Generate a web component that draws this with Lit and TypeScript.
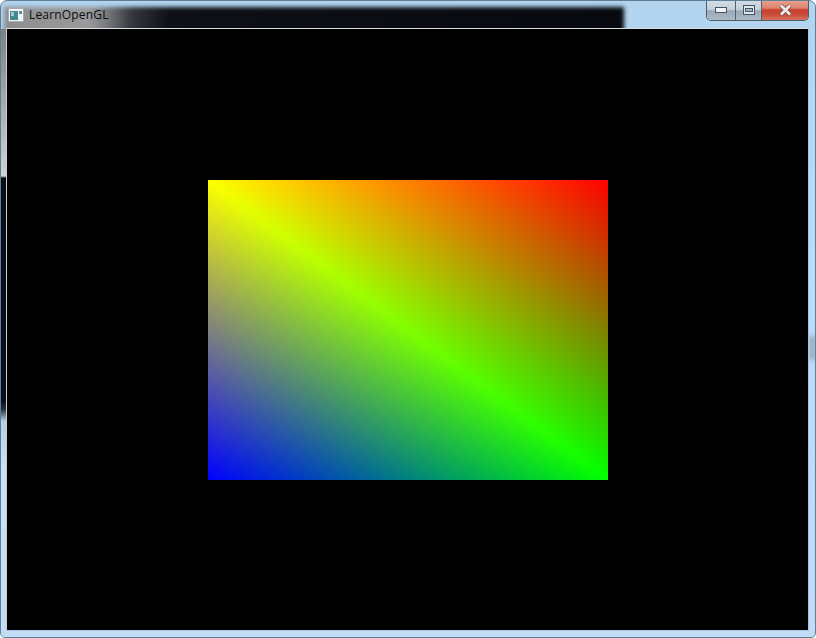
import { LitElement, html, css } from "lit";
import { customElement } from "lit/decorators.js";

@customElement("app-root")
export class AppRoot extends LitElement {
  static styles = css`
    :host { display: block; width: 816px; height: 638px; overflow: hidden; }
    .window {
      position: relative; box-sizing: border-box; width: 816px; height: 638px; overflow: hidden;
      display: flex; flex-direction: column; padding: 0 6px 6px 5px;
      border-radius: 7px 7px 5px 5px; border: 1px solid #5f7f96;
      background: linear-gradient(180deg, #b2d4ee 0%, #bcdcf6 40%, #c2dcf6 100%);
    }
    .leftglass {
      position: absolute; left: 0; top: 28px; width: 5px; height: 608px;
      background: linear-gradient(180deg, #7f8081 0px, #a0a1a2 60px, #d0d2d4 147px, #0a0c16 149px, #0b0c18 372px, #20303c 380px, #b0cfe8 392px, #cce2f5 440px, #c2dcf6 608px);
    }
    .rightmark {
      position: absolute; right: 0; top: 335px; width: 5px; height: 24px;
      background: #8fa5b8; filter: blur(2px);
    }
    .darkblur {
      position: absolute; left: 3px; top: 6px; width: 620px; height: 26px;
      background: linear-gradient(90deg, #8c8d8e 0, #9a9b9c 84px, #75777a 104px, #33363c 128px, #0e1017 165px, #07090f 100%);
      filter: blur(2px);
    }
    .titlebar {
      position: relative; height: 27px; flex: none; display: flex; align-items: center;
      padding-left: 2px; gap: 5px;
    }
    .appicon { position: relative; display: block; width: 16px; height: 16px; flex: none; }
    .title {
      position: relative; font: 12px "Open Sans", "Noto Sans", sans-serif; color: #0d0d0d;
      letter-spacing: 0.18px; white-space: nowrap;
    }
    .controls {
      position: absolute; right: 0; top: -1px; display: flex; height: 20px;
      border: 1px solid #4e5f6c; border-top: none; border-radius: 0 0 5px 5px; overflow: hidden;
    }
    .btn { display: flex; align-items: center; justify-content: center; height: 100%; }
    .min { width: 28px; background: linear-gradient(180deg, #d3dde6 0, #c3d0dc 48%, #9caab7 54%, #aab9c6 100%); border-right: 1px solid #52616d; }
    .max { width: 25px; background: linear-gradient(180deg, #d3dde6 0, #c3d0dc 48%, #9caab7 54%, #aab9c6 100%); border-right: 1px solid #52616d; }
    .close { width: 46px; background: linear-gradient(180deg, #e8a493 0, #dd8370 40%, #c73f2c 50%, #c94a36 70%, #d4705c 100%); }
    .client {
      flex: 1; min-height: 0; display: flex; align-items: center; justify-content: center;
      box-sizing: border-box; padding: 1px 0 0 1px;
      background: #000; position: relative;
      border: 1px solid; border-color: #d6dbe0 #a4c4e4 #a8c6e6 #c8ced4;
    }
    canvas { display: block; width: 400px; height: 300px; }
  `;

  firstUpdated() {
    const c = this.renderRoot.querySelector("canvas") as HTMLCanvasElement;
    const ctx = c.getContext("2d")!;
    const w = c.width, h = c.height;
    const img = ctx.createImageData(w, h);
    for (let j = 0; j < h; j++) {
      for (let i = 0; i < w; i++) {
        const x = (i + 0.5) / w, y = (j + 0.5) / h;
        let r: number, g: number, b: number;
        if (y <= x) {
          r = 1 - y; g = 1 - x + y; b = 0;
        } else {
          r = 1 - y; g = 1 - y + x; b = y - x;
        }
        const o = (j * w + i) * 4;
        img.data[o] = r * 255; img.data[o + 1] = g * 255; img.data[o + 2] = b * 255; img.data[o + 3] = 255;
      }
    }
    ctx.putImageData(img, 0, 0);
  }

  render() {
    return html`
      <div class="window">
        <div class="darkblur"></div>
        <div class="leftglass"></div>
        <div class="rightmark"></div>
        <div class="titlebar">
          <svg class="appicon" viewBox="0 0 16 16">
            <rect x="0.5" y="1.5" width="15" height="13" fill="#f2f5f6" stroke="#a4acb0"/>
            <rect x="2" y="4" width="8" height="9" fill="#3f8a94"/>
            <rect x="3" y="5" width="3" height="4" fill="#a9c9cf"/>
            <rect x="11" y="4" width="3" height="3" fill="#6f8a96"/>
          </svg>
          <span class="title">LearnOpenGL</span>
          <div class="controls">
            <div class="btn min"><svg width="12" height="6" viewBox="0 0 12 6"><rect x="0.5" y="0.5" width="11" height="5" fill="#f0f3f6" stroke="#46545f"/></svg></div>
            <div class="btn max"><svg width="12" height="10" viewBox="0 0 12 10"><rect x="0.5" y="0.5" width="11" height="9" fill="#dfe7ed" stroke="#46545f"/><rect x="2.5" y="3.5" width="7" height="3" fill="#a7b6c2" stroke="#46545f"/></svg></div>
            <div class="btn close"><svg width="15" height="12" viewBox="0 0 15 12"><path d="M3 1.5 L12 10.5 M12 1.5 L3 10.5" stroke="#6a4a44" stroke-width="4.2"/><path d="M3 1.5 L12 10.5 M12 1.5 L3 10.5" stroke="#f0e8e6" stroke-width="2.8"/></svg></div>
          </div>
        </div>
        <div class="client"><canvas width="400" height="300"></canvas></div>
      </div>
    `;
  }
}
